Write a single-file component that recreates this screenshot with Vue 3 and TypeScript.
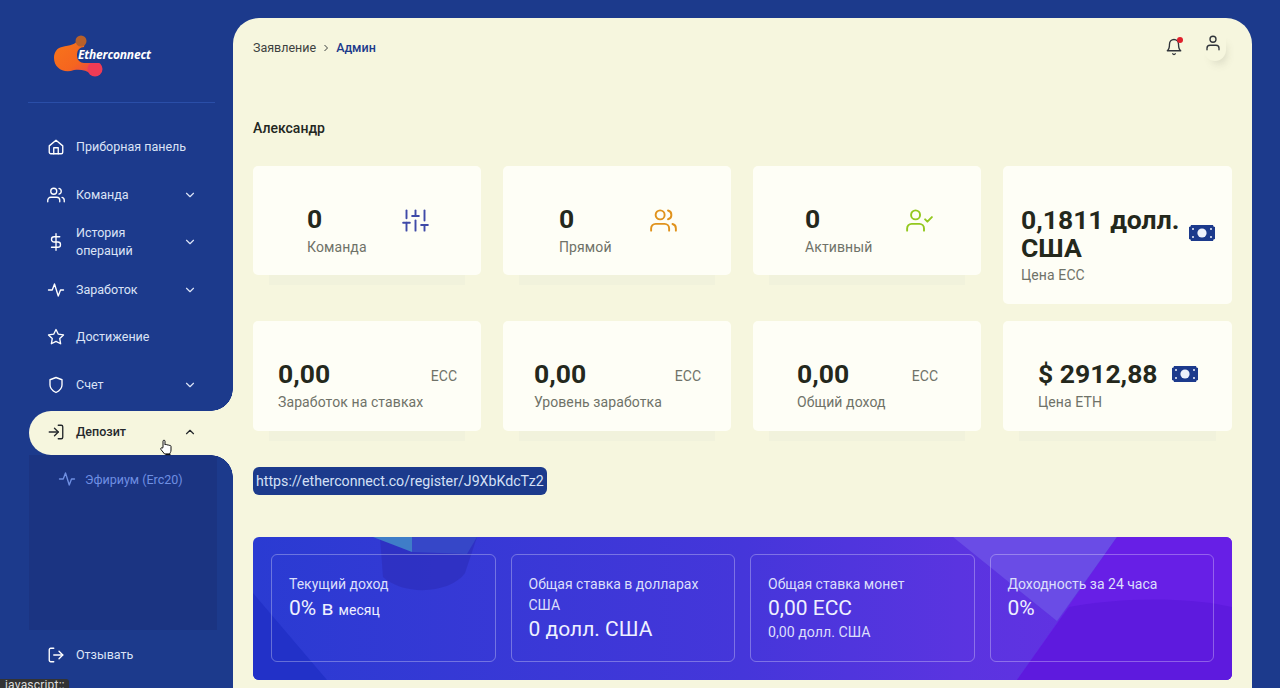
<script setup lang="ts">
const icons: Record<string, string[]> = {
  home: ['M3 10.5 12 3l9 7.5V19a2 2 0 0 1-2 2H5a2 2 0 0 1-2-2z', 'M9 21v-8h6v8'],
  users: ['M17 21v-2a4 4 0 0 0-4-4H5a4 4 0 0 0-4 4v2', 'M13 7a4 4 0 1 1-8 0 4 4 0 0 1 8 0', 'M23 21v-2a4 4 0 0 0-3-3.87', 'M16 3.13a4 4 0 0 1 0 7.75'],
  dollar: ['M12 1v22', 'M17 5H9.5a3.5 3.5 0 0 0 0 7h5a3.5 3.5 0 0 1 0 7H6'],
  activity: ['M22 12h-4l-3 8-5-16-3 8H2'],
  star: ['M12 2l3.09 6.26L22 9.27l-5 4.87 1.18 6.88L12 17.77l-6.18 3.25L7 14.14 2 9.27l6.91-1.01L12 2z'],
  shield: ['M12 22s8-4 8-10V5l-8-3-8 3v7c0 6 8 10 8 10z'],
  login: ['M15 3h4a2 2 0 0 1 2 2v14a2 2 0 0 1-2 2h-4', 'M10 17l5-5-5-5', 'M15 12H3'],
  logout: ['M9 21H5a2 2 0 0 1-2-2V5a2 2 0 0 1 2-2h4', 'M16 17l5-5-5-5', 'M21 12H9'],
  sliders: ['M4 21v-7', 'M4 10V3', 'M12 21v-9', 'M12 8V3', 'M20 21v-5', 'M20 12V3', 'M1 14h6', 'M9 8h6', 'M17 16h6'],
  check: ['M16 21v-2a4 4 0 0 0-4-4H5a4 4 0 0 0-4 4v2', 'M12.5 7a4 4 0 1 1-8 0 4 4 0 0 1 8 0', 'M17 11l2 2 4-4'],
  bell: ['M18 8A6 6 0 0 0 6 8c0 7-3 9-3 9h18s-3-2-3-9', 'M13.73 21a2 2 0 0 1-3.46 0'],
  user: ['M20 21v-2a4 4 0 0 0-4-4H8a4 4 0 0 0-4 4v2', 'M16 7a4 4 0 1 1-8 0 4 4 0 0 1 8 0'],
  down: ['M6 9l6 6 6-6'],
  up: ['M18 15l-6-6-6 6'],
}

const menu = [
  { icon: 'home', label: 'Приборная панель', chev: '' },
  { icon: 'users', label: 'Команда', chev: 'down' },
  { icon: 'dollar', label: 'История операций', chev: 'down' },
  { icon: 'activity', label: 'Заработок', chev: 'down' },
  { icon: 'star', label: 'Достижение', chev: '' },
  { icon: 'shield', label: 'Счет', chev: 'down' },
]

const cards = [
  { cls: 'c1', value: '0', label: 'Команда', icon: 'sliders', tone: 'indigo', unit: '' },
  { cls: 'c2', value: '0', label: 'Прямой', icon: 'users', tone: 'amber', unit: '' },
  { cls: 'c3', value: '0', label: 'Активный', icon: 'check', tone: 'lime', unit: '' },
  { cls: 'c4', value: '0,1811 долл. США', label: 'Цена ECC', icon: 'money', tone: '', unit: '' },
  { cls: 'c5', value: '0,00', label: 'Заработок на ставках', icon: '', tone: '', unit: 'ECC' },
  { cls: 'c6', value: '0,00', label: 'Уровень заработка', icon: '', tone: '', unit: 'ECC' },
  { cls: 'c7', value: '0,00', label: 'Общий доход', icon: '', tone: '', unit: 'ECC' },
  { cls: 'c8', value: '$ 2912,88', label: 'Цена ETH', icon: 'money', tone: '', unit: '' },
]
</script>

<template>
  <div class="app">
    <aside class="sidebar">
      <div class="logo">
        <svg class="logo-mark" width="60" height="52" viewBox="0 0 60 52">
          <defs>
            <linearGradient id="logoGrad" x1="0" y1="0" x2="1" y2="1">
              <stop offset="0" stop-color="#f8761a" />
              <stop offset=".6" stop-color="#f5651f" />
              <stop offset="1" stop-color="#ef3b55" />
            </linearGradient>
          </defs>
          <path d="M10 15C18 13 24 13 26 7l7 3c-2 6-1 10 3 14l10 9-6 9c-6-4-12-5-18-4C12 42 2 36 2 26c0-6 3-10 8-11z" fill="url(#logoGrad)" />
          <circle cx="29" cy="9" r="5.5" fill="#b8602a" />
          <circle cx="43" cy="37" r="7.5" fill="#ef3b55" />
        </svg>
        <span class="logo-text">Etherconnect</span>
      </div>
      <div class="divider"></div>

      <ul class="nav">
        <li v-for="item in menu" :key="item.label" class="nav-item">
          <svg class="nav-icon" viewBox="0 0 24 24"><path v-for="d in icons[item.icon]" :key="d" :d="d" /></svg>
          <span class="nav-label">{{ item.label }}</span>
          <svg v-if="item.chev" class="chev" viewBox="0 0 24 24"><path v-for="d in icons[item.chev]" :key="d" :d="d" /></svg>
        </li>
        <li class="nav-item active">
          <svg class="nav-icon" viewBox="0 0 24 24"><path v-for="d in icons.login" :key="d" :d="d" /></svg>
          <span class="nav-label">Депозит</span>
          <svg class="chev" viewBox="0 0 24 24"><path v-for="d in icons.up" :key="d" :d="d" /></svg>
          <svg class="hand" width="15" height="17" viewBox="0 0 15 17">
            <path d="M4 8V2.2c0-1.4 2-1.4 2 0V6c.4-.8 1.8-.8 2 .2.5-.7 1.8-.6 2 .4.6-.5 1.9-.3 2 .8V11c0 2.2-1 3-1.6 4H5.6L2 10.6c-.9-1.2.5-2.5 1.6-1.5z" fill="#fff" stroke="#111" stroke-width="1" stroke-linejoin="round" />
            <path d="M6.5 15.5h5" stroke="#111" stroke-width="1.4" />
          </svg>
        </li>
      </ul>

      <div class="submenu">
        <div class="sub-item">
          <svg class="nav-icon" viewBox="0 0 24 24"><path v-for="d in icons.activity" :key="d" :d="d" /></svg>
          <span>Эфириум (Erc20)</span>
        </div>
      </div>

      <div class="nav-item logout">
        <svg class="nav-icon" viewBox="0 0 24 24"><path v-for="d in icons.logout" :key="d" :d="d" /></svg>
        <span class="nav-label">Отзывать</span>
      </div>
      <div class="status">javascript:;</div>
    </aside>

    <main class="main">
      <header class="topbar">
        <nav class="crumbs">
          <span>Заявление</span>
          <svg class="crumb-sep" viewBox="0 0 24 24"><path d="M9 6l6 6-6 6" /></svg>
          <strong>Админ</strong>
        </nav>
        <div class="top-actions">
          <span class="bell">
            <svg viewBox="0 0 24 24"><path v-for="d in icons.bell" :key="d" :d="d" /></svg>
            <i class="dot"></i>
          </span>
          <span class="avatar">
            <svg viewBox="0 0 24 24"><path v-for="d in icons.user" :key="d" :d="d" /></svg>
          </span>
        </div>
      </header>

      <h1 class="name">Александр</h1>

      <section class="grid">
        <article v-for="c in cards" :key="c.cls" class="card" :class="c.cls">
          <div class="card-text">
            <div class="value">{{ c.value }}</div>
            <div class="label">{{ c.label }}</div>
          </div>
          <span v-if="c.unit" class="unit">{{ c.unit }}</span>
          <svg v-else-if="c.icon === 'money'" class="money" viewBox="0 0 26 16">
            <path d="M2 0h22a2 2 0 0 0 2 2v12a2 2 0 0 0-2 2H2a2 2 0 0 0-2-2V2a2 2 0 0 0 2-2z" fill="#1c3a8c" />
            <circle cx="13" cy="8" r="4.6" fill="#eef2fb" />
            <circle cx="4" cy="4" r="1" fill="#eef2fb" /><circle cx="22" cy="4" r="1" fill="#eef2fb" />
            <circle cx="4" cy="12" r="1" fill="#eef2fb" /><circle cx="22" cy="12" r="1" fill="#eef2fb" />
          </svg>
          <svg v-else class="card-icon" :class="c.tone" viewBox="0 0 24 24"><path v-for="d in icons[c.icon]" :key="d" :d="d" /></svg>
        </article>
      </section>

      <div class="link"><span>https://etherconnect.co/register/J9XbKdcTz2</span></div>

      <section class="banner">
        <svg class="banner-art" viewBox="0 0 979 143" preserveAspectRatio="none">
          <path d="M0 56 74 143H0z" fill="#2231c8" />
          <path d="M127 0h97l-12 36c-14 20-60 24-82 4z" fill="#2d2fbe" opacity=".75" />
          <path d="M120 0h39v15z" fill="#3f7dc8" />
          <path d="M159 0h65l-10 17-55-2z" fill="#3647c8" />
          <path d="M700 0h164l-60 84z" fill="#6a4ce6" />
          <path d="M764 143 864 0h115v143z" fill="#671fe6" />
          <path d="M816 70c40-8 110-12 163 0v73H764z" fill="#5e1ade" />
        </svg>
        <div class="stat">
          <div class="stat-label">Текущий доход</div>
          <div class="stat-value">0% в <small>месяц</small></div>
        </div>
        <div class="stat">
          <div class="stat-label">Общая ставка в долларах США</div>
          <div class="stat-value">0 долл. США</div>
        </div>
        <div class="stat">
          <div class="stat-label">Общая ставка монет</div>
          <div class="stat-value">0,00 ECC</div>
          <div class="stat-sub">0,00 долл. США</div>
        </div>
        <div class="stat">
          <div class="stat-label">Доходность за 24 часа</div>
          <div class="stat-value">0%</div>
        </div>
      </section>
    </main>
  </div>
</template>

<style>
html, body { margin: 0; overflow: hidden; }
</style>

<style scoped>
.app {
  display: flex;
  height: 688px;
  overflow: hidden;
  padding-right: 28px;
  box-sizing: border-box;
  background: #1c3a8c;
  font-family: Roboto, "Noto Sans", sans-serif;
}

/* Sidebar */
.sidebar {
  position: relative;
  width: 233px;
  flex: none;
  display: flex;
  flex-direction: column;
}
.logo {
  position: relative;
  height: 102px;
  box-sizing: border-box;
  padding: 32px 0 0 52px;
}
.logo-mark { display: block; }
.logo-text {
  position: absolute;
  left: 77px;
  top: 47px;
  padding: 0 1px;
  background: #1c3a8c;
  border-radius: 7px;
  font: italic 700 12px/16px "Open Sans", sans-serif;
  letter-spacing: -.2px;
  color: #fff;
}
.divider {
  height: 1px;
  margin: 0 18px 0 28px;
  background: #2a4ea8;
}
.nav {
  list-style: none;
  margin: 22px 0 0;
  padding: 0;
  display: flex;
  flex-direction: column;
  gap: 3.5px;
}
.nav-item {
  position: relative;
  display: flex;
  align-items: center;
  box-sizing: border-box;
  height: 44px;
  margin-left: 29px;
  padding: 0 36px 0 18px;
  font-size: 12.5px;
  line-height: 18px;
  color: #dbe3f6;
}
.nav-icon {
  flex: none;
  width: 18px;
  height: 18px;
  margin-right: 11px;
  fill: none;
  stroke: currentColor;
  stroke-width: 1.8;
  stroke-linecap: round;
  stroke-linejoin: round;
}
.nav-item .nav-icon { color: #fff; }
.nav-label { flex: 1; }
.chev {
  flex: none;
  width: 14px;
  height: 14px;
  fill: none;
  stroke: currentColor;
  stroke-width: 2;
  stroke-linecap: round;
  stroke-linejoin: round;
}
.active {
  margin-top: 1px;
  padding-bottom: 2px;
  background: #f6f6de;
  border-radius: 22px 0 0 22px;
  color: #24282c;
  font-weight: 500;
}
.active .nav-icon { color: #24282c; }
.active::before,
.active::after {
  content: "";
  position: absolute;
  right: 0;
  width: 22px;
  height: 22px;
}
.active::before {
  top: -22px;
  background: radial-gradient(circle at 0 0, transparent 21.5px, #f6f6de 22px);
}
.active::after {
  bottom: -22px;
  background: radial-gradient(circle at 0 100%, transparent 21.5px, #f6f6de 22px);
}
.hand {
  position: absolute;
  left: 130px;
  top: 28px;
}
.submenu {
  height: 175px;
  margin: 0 16px 0 29px;
  padding: 15px 0 0 29px;
  box-sizing: border-box;
  background: #1b3482;
}
.sub-item {
  display: flex;
  align-items: center;
  font-size: 12.5px;
  color: #6f8fe2;
}
.sub-item .nav-icon { margin-right: 9px; }
.logout { margin-top: 3px; }
.status {
  position: absolute;
  left: 0;
  bottom: -3px;
  padding: 0 4px 0 5px;
  background: #333;
  color: #ddd;
  font-size: 12px;
  line-height: 12px;
  letter-spacing: .2px;
  border-top-right-radius: 3px;
}

/* Main */
.main {
  flex: 1;
  min-width: 0;
  margin-top: 18px;
  padding: 0 20px;
  background: #f6f6de;
  border-radius: 26px 26px 0 0;
}
.topbar {
  display: flex;
  align-items: flex-start;
  justify-content: space-between;
  height: 60px;
  padding-top: 21px;
  box-sizing: border-box;
}
.crumbs {
  display: flex;
  align-items: center;
  font-size: 12.5px;
  line-height: 18px;
  color: #3c4140;
}
.crumb-sep {
  width: 12px;
  height: 12px;
  margin: 0 4px;
  fill: none;
  stroke: #3c4140;
  stroke-width: 2;
}
.crumbs strong { font-weight: 500; color: #1c3a8c; }
.top-actions {
  display: flex;
  align-items: flex-start;
  gap: 21px;
  margin-right: 6px;
}
.bell, .avatar { position: relative; display: block; }
.bell { margin-top: -1px; }
.bell svg, .avatar svg {
  display: block;
  width: 18px;
  height: 18px;
  fill: none;
  stroke: #30343a;
  stroke-width: 1.8;
  stroke-linecap: round;
  stroke-linejoin: round;
}
.avatar {
  margin-top: -5px;
  padding: 0 4px 9px 0;
  border-radius: 0 0 16px 16px;
  box-shadow: 4px 7px 8px -4px rgba(90, 90, 70, .18);
}
.dot {
  position: absolute;
  right: 0;
  top: -1px;
  width: 6px;
  height: 6px;
  border-radius: 50%;
  background: #e0202c;
}
.name {
  margin: 0;
  padding-top: 41px;
  font-size: 14px;
  line-height: 18px;
  font-weight: 500;
  color: #23271f;
}
.grid {
  display: grid;
  grid-template-columns: repeat(3, 228px) 229px;
  column-gap: 22px;
  row-gap: 17px;
  margin-top: 29px;
  align-items: start;
}
.card {
  display: flex;
  align-items: center;
  justify-content: space-between;
  box-sizing: border-box;
  height: 110px;
  background: #fefef6;
  border-radius: 5px;
  box-shadow: 0 26px 0 -16px #f1f2dc;
}
.c1, .c2, .c3 { height: 109px; }
.card:nth-child(4) { height: 138px; box-shadow: none; }
.c1 { padding: 0 52px 0 54px; }
.c2 { padding: 0 54px 0 56px; }
.c3 { padding: 0 48px 0 52px; }
.c4 { padding: 0 17px 0 18px; }
.c5 { padding: 0 24px 0 25px; }
.c6 { padding: 0 30px 0 31px; }
.c7 { padding: 0 43px 0 44px; }
.c8 { padding: 0 34px 0 35px; }
.card-text { padding-top: 20px; }
.value {
  font-size: 26.5px;
  line-height: 28px;
  font-weight: 700;
  color: #24281c;
}
.c4 .value { width: 165px; }
.label {
  margin-top: 4px;
  font-size: 14px;
  line-height: 20px;
  letter-spacing: .1px;
  color: #6f7268;
}
.c4 .label { margin-top: 3px; }
.unit {
  align-self: flex-start;
  margin-top: 46px;
  font-size: 14px;
  line-height: 18px;
  color: #6f7268;
}
.card-icon {
  flex: none;
  width: 27px;
  height: 27px;
  fill: none;
  stroke-width: 1.7;
  stroke-linecap: round;
  stroke-linejoin: round;
}
.indigo { stroke: #3f4aa8; }
.amber { stroke: #e0921c; }
.lime { stroke: #93c81e; }
.money { flex: none; width: 26px; height: 16px; margin-bottom: 4px; }
.link {
  display: flex;
  margin-top: 36px;
}
.link span {
  padding: 0 3px;
  background: #1c3a8c;
  border-radius: 6px;
  font-size: 14.2px;
  line-height: 28px;
  color: #d4e0f6;
}
.banner {
  position: relative;
  overflow: hidden;
  display: grid;
  grid-template-columns: repeat(4, 224.5px);
  column-gap: 15px;
  width: 979px;
  height: 143px;
  margin-top: 42px;
  padding: 17px 18px;
  box-sizing: border-box;
  border-radius: 6px;
  background: linear-gradient(90deg, #2a3bd2 0%, #4536da 50%, #5a34e0 72%, #6a2fe4 100%);
}
.banner-art {
  position: absolute;
  inset: 0;
  width: 100%;
  height: 100%;
}
.stat {
  position: relative;
  box-sizing: border-box;
  height: 108px;
  padding: 19px 17px 0;
  border: 1px solid rgba(255, 255, 255, .3);
  border-radius: 6px;
  color: #eef0ff;
}
.stat-label {
  font-size: 14px;
  line-height: 21px;
  color: #dcdffb;
}
.stat-value {
  margin-top: 1px;
  font-size: 21px;
  line-height: 24px;
}
.stat-value small { font-size: 14px; }
.stat-sub {
  margin-top: 2px;
  font-size: 14.2px;
  line-height: 20px;
  color: #dcdffb;
}
</style>
